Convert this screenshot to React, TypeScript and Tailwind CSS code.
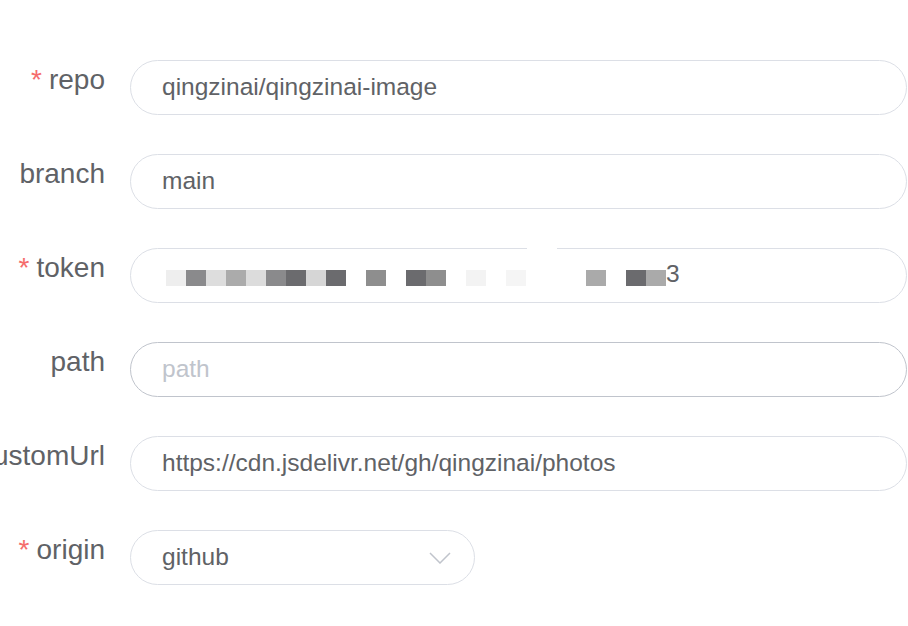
import React from "react";

const FONT = { fontFamily: '"Liberation Sans", Arial, Helvetica, sans-serif' };

function Label({ text, required }: { text: string; required?: boolean }) {
  return (
    <div className="w-[105px] shrink-0 flex justify-end whitespace-nowrap text-[28px] leading-[40px] text-[#606266]">
      {required && <span className="text-[#f56c6c] mr-[7px]">*</span>}
      <span>{text}</span>
    </div>
  );
}

const cells: (string | null)[] = [
  "#eeeeee", "#8a8a8c", "#dddddd", "#ababab", "#dcdcdc", "#8a8a8c", "#6b6b6e", "#d6d6d6", "#6b6b6e",
  null, "#8e8e8e", null, "#6b6b6e", "#8e8e8e", null, "#f3f3f3", null, "#f5f5f5",
  null, null, null, "#aaaaaa", null, "#6b6b6e", "#aaaaaa",
];

export default function App() {
  return (
    <div className="w-[908px] h-[626px] bg-white overflow-hidden" style={FONT}>
      <div className="pt-[60px] flex flex-col gap-[39px]">
        <div className="flex items-start">
          <Label text="repo" required />
          <div className="ml-[25px] w-[777px] h-[55px] rounded-full border border-[#dcdfe6] pl-[31px] flex items-center text-[24.5px] text-[#606266]">
            qingzinai/qingzinai-image
          </div>
        </div>
        <div className="flex items-start">
          <Label text="branch" />
          <div className="ml-[25px] w-[777px] h-[55px] rounded-full border border-[#dcdfe6] pl-[31px] flex items-center text-[24.5px] text-[#606266]">
            main
          </div>
        </div>
        <div className="flex items-start">
          <Label text="token" required />
          <div className="relative ml-[25px] w-[777px] h-[55px] rounded-full border border-[#dcdfe6] pl-[35px] flex items-center text-[24.5px] text-[#606266]">
            <div className="flex items-center mt-[5px]">
              {cells.map((c, i) => (
                <div
                  key={i}
                  className="w-[20px] h-[16px]"
                  style={{ background: c ?? "transparent" }}
                />
              ))}
            </div>
            <span className="leading-none -mt-[3px]">3</span>
            <div className="absolute top-[-2px] left-[396px] w-[30px] h-[5px] bg-white" />
          </div>
        </div>
        <div className="flex items-start">
          <Label text="path" />
          <div className="ml-[25px] w-[777px] h-[55px] rounded-full border border-[#c0c4cc] pl-[31px] flex items-center text-[24.5px] text-[#c0c4cc]">
            path
          </div>
        </div>
        <div className="flex items-start">
          <Label text="customUrl" />
          <div className="ml-[25px] w-[777px] h-[55px] rounded-full border border-[#dcdfe6] pl-[31px] flex items-center text-[24.5px] text-[#606266]">
            https://cdn.jsdelivr.net/gh/qingzinai/photos
          </div>
        </div>
        <div className="flex items-start">
          <Label text="origin" required />
          <div className="ml-[25px] w-[345px] h-[55px] rounded-full border border-[#dcdfe6] pl-[31px] pr-[23px] flex items-center justify-between text-[24.5px] text-[#606266]">
            <span>github</span>
            <svg width="22" height="12" viewBox="0 0 22 12" fill="none">
              <polyline points="1,1 11,11 21,1" stroke="#c0c4cc" strokeWidth="1.5" fill="none" />
            </svg>
          </div>
        </div>
      </div>
    </div>
  );
}
